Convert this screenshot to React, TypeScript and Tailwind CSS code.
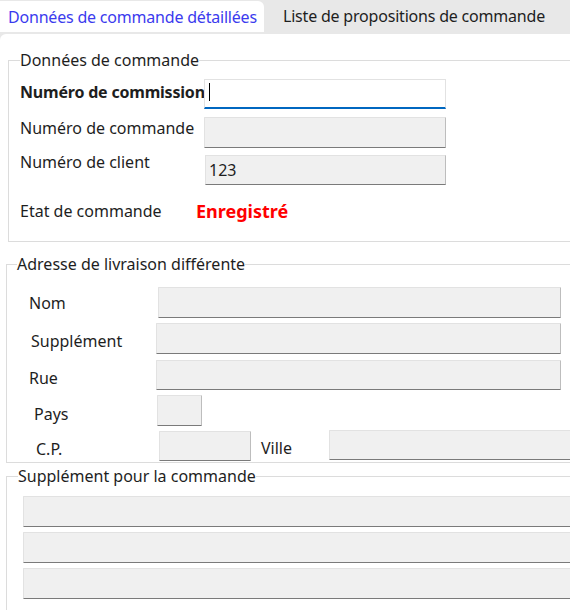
import React from "react";

const font = { fontFamily: '"Noto Sans", "Open Sans", Arial, sans-serif' };

function Box({ className }: { className: string }) {
  return (
    <div
      className={
        "shrink-0 bg-[#f0f0f0] border border-[#e2e2e2] border-r-[#bdbdbd] border-b-[#7a7a7a] rounded-[1px] " +
        className
      }
    />
  );
}

export default function App() {
  return (
    <div className="w-[570px] h-[610px] overflow-hidden bg-white text-[16px] leading-[20px] text-[#1e1e1e]" style={font}>
      {/* Tabs */}
      <div className="flex h-[32px] items-end bg-[#e8e8e8] whitespace-nowrap">
        <div className="flex h-[31px] w-[264px] shrink-0 items-center rounded-tr-[6px] bg-white pl-[8px] text-[#3b3bee] tracking-[-0.2px]">
          Données de commande détaillées
        </div>
        <div className="flex h-full items-center pl-[19px] tracking-[-0.2px]">Liste de propositions de commande</div>
      </div>
      <div className="bg-[#e8e8e8] pt-[2px]">
        <div className="rounded-tl-[6px] bg-white pt-[16px]">
          {/* Group 1 */}
          <fieldset className="ml-[8px] w-[620px] border border-[#dcdcdc] pb-[20px]">
            <legend className="ml-[11px] leading-[20px]">Données de commande</legend>
            <div className="pl-[11px]">
              <div className="mt-[9px] flex items-start">
                <div className="mt-[3px] w-[184px] font-bold tracking-[-0.2px] whitespace-nowrap">Numéro de commission</div>
                <div className="relative h-[30px] w-[242px] shrink-0 border border-[#e2e2e2] border-b-2 border-b-[#0067c0] bg-white">
                  <div className="absolute left-[4px] top-[3px] h-[18px] w-[1px] bg-black" />
                </div>
              </div>
              <div className="mt-[8px] flex items-start">
                <div className="mt-[1px] w-[184px]">Numéro de commande</div>
                <Box className="h-[31px] w-[242px]" />
              </div>
              <div className="mt-[7px] flex items-start">
                <div className="-mt-[3px] w-[185px]">Numéro de client</div>
                <div className="flex h-[30px] w-[241px] items-center bg-[#f0f0f0] border border-[#e2e2e2] border-r-[#bdbdbd] border-b-[#7a7a7a] pl-[3px]">
                  123
                </div>
              </div>
              <div className="mt-[16px] flex items-center">
                <div className="w-[176px]">Etat de commande</div>
                <div className="text-[18px] font-bold text-[#ff0000]">Enregistré</div>
              </div>
            </div>
          </fieldset>

          {/* Group 2 */}
          <fieldset className="ml-[6px] mt-[12px] w-[620px] border border-[#dcdcdc] pb-[1px]">
            <legend className="ml-[10px] leading-[20px]">Adresse de livraison différente</legend>
            <div className="mt-[13px] flex items-start">
              <div className="mt-[6px] w-[151px] pl-[22px]">Nom</div>
              <Box className="h-[31px] w-[403px]" />
            </div>
            <div className="mt-[5px] flex items-start">
              <div className="mt-[8px] w-[149px] pl-[24px]">Supplément</div>
              <Box className="h-[31px] w-[405px]" />
            </div>
            <div className="mt-[6px] flex items-start">
              <div className="mt-[8px] w-[149px] pl-[22px]">Rue</div>
              <Box className="h-[30px] w-[405px]" />
            </div>
            <div className="mt-[5px] flex items-start">
              <div className="mt-[9px] w-[150px] pl-[27px]">Pays</div>
              <Box className="h-[31px] w-[45px]" />
            </div>
            <div className="mt-[4px] flex items-start">
              <div className="mt-[9px] w-[152px] pl-[29px]">C.P.</div>
              <Box className="mt-[1px] h-[30px] w-[92px]" />
              <div className="ml-[10px] mt-[8px] w-[68px]">Ville</div>
              <Box className="h-[30px] w-[260px]" />
            </div>
          </fieldset>

          {/* Group 3 */}
          <fieldset className="ml-[6px] mt-[3px] w-[620px] border border-[#dcdcdc] pb-[20px]">
            <legend className="ml-[11px] leading-[20px]">Supplément pour la commande</legend>
            <div className="pl-[16px]">
              <Box className="mt-[10px] h-[31px] w-[560px]" />
              <Box className="mt-[5px] h-[31px] w-[560px]" />
              <Box className="mt-[5px] h-[31px] w-[560px]" />
            </div>
          </fieldset>
        </div>
      </div>
    </div>
  );
}
